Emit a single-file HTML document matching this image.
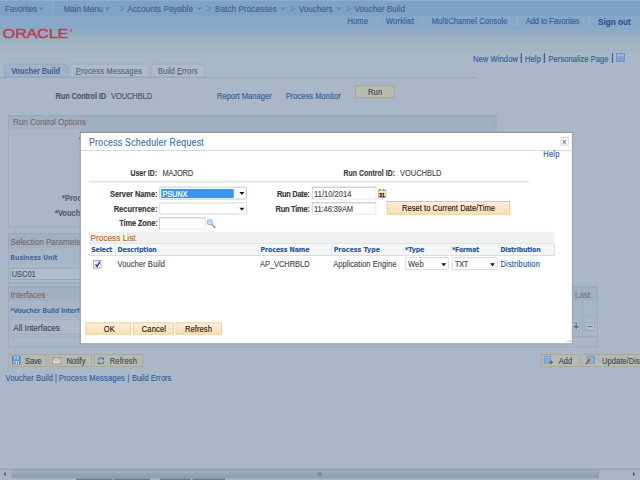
<!DOCTYPE html>
<html><head><meta charset="utf-8"><title>Voucher Build</title>
<style>
html,body{margin:0;padding:0;width:640px;height:480px;overflow:hidden;background:#a9b7c8;}
#pg{position:absolute;left:0;top:0;width:1024px;height:640px;transform:scale(0.625,0.75);transform-origin:0 0;font-family:"Liberation Sans",sans-serif;overflow:hidden;background:#a9b7c8;}
#pg div{position:absolute;}
#pg .t{position:absolute;white-space:nowrap;-webkit-text-stroke:0.22px currentColor;}
</style></head><body><div id="pg">
<div style="left:0px;top:0px;width:1024px;height:67.33px;background:linear-gradient(#86a8c9 0%,#88a8c8 56%,#8fa9c6 61%,#95aac4 67%,#9aafc2 72%,#9eb3c0 80%,#a1b4c2 86%,#a4b4c7 92%,#a6b6c8 100%);"></div>
<div style="left:0px;top:0px;width:1024px;height:20.8px;background:#7fa2c7;border-top:1px solid #90b0d2;box-sizing:border-box;"></div>
<div style="left:0px;top:66.67px;width:1024px;height:0.93px;background:#9cafbf;"></div>
<span class="t" style="left:8px;top:4.01617px;font-size:13px;line-height:16px;letter-spacing:-0.252px;color:#45628a;">Favorites</span>
<span class="t" style="left:101.92px;top:4.01617px;font-size:13px;line-height:16px;letter-spacing:-0.159px;color:#45628a;">Main Menu</span>
<span class="t" style="left:204px;top:4.01617px;font-size:13px;line-height:16px;letter-spacing:0.045px;color:#45628a;">Accounts Payable</span>
<span class="t" style="left:344px;top:4.01617px;font-size:13px;line-height:16px;letter-spacing:0.110px;color:#45628a;">Batch Processes</span>
<span class="t" style="left:477.92px;top:4.01617px;font-size:13px;line-height:16px;letter-spacing:-0.015px;color:#45628a;">Vouchers</span>
<span class="t" style="left:567.2px;top:4.01617px;font-size:13px;line-height:16px;letter-spacing:0.044px;color:#45628a;">Voucher Build</span>
<div style="left:62.08px;top:9.87px;width:0px;height:0px;border-left:4.4px solid transparent;border-right:4.4px solid transparent;border-top:4.8px solid #6187b7;"></div>
<div style="left:167.68px;top:9.87px;width:0px;height:0px;border-left:4.4px solid transparent;border-right:4.4px solid transparent;border-top:4.8px solid #6187b7;"></div>
<div style="left:315.36px;top:9.87px;width:0px;height:0px;border-left:4.4px solid transparent;border-right:4.4px solid transparent;border-top:4.8px solid #6187b7;"></div>
<div style="left:449.28px;top:9.87px;width:0px;height:0px;border-left:4.4px solid transparent;border-right:4.4px solid transparent;border-top:4.8px solid #6187b7;"></div>
<div style="left:537.76px;top:9.87px;width:0px;height:0px;border-left:4.4px solid transparent;border-right:4.4px solid transparent;border-top:4.8px solid #6187b7;"></div>
<span class="t" style="left:190.88px;top:2.85525px;font-size:13.5px;line-height:17px;color:#6183b0;-webkit-text-stroke:0.1px;">&gt;</span>
<span class="t" style="left:330.08px;top:2.85525px;font-size:13.5px;line-height:17px;color:#6183b0;-webkit-text-stroke:0.1px;">&gt;</span>
<span class="t" style="left:464px;top:2.85525px;font-size:13.5px;line-height:17px;color:#6183b0;-webkit-text-stroke:0.1px;">&gt;</span>
<span class="t" style="left:553.6px;top:2.85525px;font-size:13.5px;line-height:17px;color:#6183b0;-webkit-text-stroke:0.1px;">&gt;</span>
<div style="left:83.52px;top:0.8px;width:1.28px;height:20px;background:#98b5d3;"></div>
<span class="t" style="left:4.32px;top:35.1886px;font-size:16.4px;line-height:20px;color:#bd3c57;letter-spacing:-0.3px;transform:scaleX(1.6);transform-origin:0 50%;-webkit-text-stroke:0.55px #bd3c57;">ORACLE</span>
<span class="t" style="left:112px;top:37.3242px;font-size:5px;line-height:6px;color:#c0405b;">&#174;</span>
<span class="t" style="left:556px;top:21.438px;font-size:12px;line-height:15px;letter-spacing:0.196px;color:#33609a;">Home</span>
<span class="t" style="left:617.6px;top:21.438px;font-size:12px;line-height:15px;letter-spacing:0.293px;color:#33609a;">Worklist</span>
<span class="t" style="left:690.72px;top:21.438px;font-size:12px;line-height:15px;letter-spacing:0.194px;color:#33609a;">MultiChannel Console</span>
<span class="t" style="left:841.12px;top:21.438px;font-size:12px;line-height:15px;letter-spacing:-0.081px;color:#33609a;">Add to Favorites</span>
<span class="t" style="left:956.8px;top:20.6828px;font-size:13px;line-height:16px;letter-spacing:0.040px;color:#2d5291;font-weight:bold;">Sign out</span>
<div style="left:603.68px;top:23.33px;width:1.12px;height:10.67px;background:#9ab2cc;"></div>
<div style="left:675.68px;top:23.33px;width:1.12px;height:10.67px;background:#9ab2cc;"></div>
<div style="left:826.4px;top:23.33px;width:1.12px;height:10.67px;background:#9ab2cc;"></div>
<div style="left:942.4px;top:23.33px;width:1.12px;height:10.67px;background:#9ab2cc;"></div>
<span class="t" style="left:756.8px;top:70.7713px;font-size:12px;line-height:15px;letter-spacing:0.197px;color:#33609a;">New Window</span>
<span class="t" style="left:840px;top:70.7713px;font-size:12px;line-height:15px;letter-spacing:0.228px;color:#33609a;">Help</span>
<span class="t" style="left:877.6px;top:70.7713px;font-size:12px;line-height:15px;letter-spacing:0.121px;color:#33609a;">Personalize Page</span>
<div style="left:833.28px;top:71.47px;width:1.84px;height:12.4px;background:#4b5a7a;"></div>
<div style="left:870.4px;top:71.47px;width:1.84px;height:12.4px;background:#4b5a7a;"></div>
<div style="left:979.2px;top:71.47px;width:1.84px;height:12.4px;background:#4b5a7a;"></div>
<div style="left:985.6px;top:70.53px;width:14.24px;height:11.87px;border:1.5px solid #5d8ac2;box-sizing:border-box;background:#86a8d3;"></div>
<div style="left:987.2px;top:72.8px;width:11.04px;height:1.33px;background:#b9cde6;"></div>
<div style="left:987.2px;top:76.8px;width:11.04px;height:0.8px;background:#6f97c9;"></div>
<div style="left:992.32px;top:74.67px;width:0.96px;height:6.67px;background:#6f97c9;"></div>
<div style="left:0px;top:102.67px;width:763.2px;height:1.07px;background:#8fa5c1;"></div>
<div style="left:6.88px;top:85.33px;width:101.44px;height:18.13px;background:#a0b3cb;border:1px solid #8aa2c1;box-sizing:border-box;border-radius:3px 3px 0 0;"></div>
<div style="left:110.88px;top:85.33px;width:128.32px;height:17.6px;background:#afbbcb;border:1px solid #93a7c1;box-sizing:border-box;border-radius:3px 3px 0 0;"></div>
<div style="left:241.6px;top:85.33px;width:86.4px;height:17.6px;background:#afbbcb;border:1px solid #93a7c1;box-sizing:border-box;border-radius:3px 3px 0 0;"></div>
<span class="t" style="left:17.92px;top:87.3047px;font-size:12px;line-height:15px;letter-spacing:-0.183px;color:#45628c;font-weight:bold;-webkit-text-stroke:0;">Voucher Build</span>
<span class="t" style="left:121.12px;top:87.3047px;font-size:12px;line-height:15px;letter-spacing:0.293px;color:#586a84;"><u>P</u>rocess Messages</span>
<span class="t" style="left:252.8px;top:87.3047px;font-size:12px;line-height:15px;letter-spacing:0.040px;color:#586a84;">Build <u>E</u>rrors</span>
<span class="t" style="left:88.8px;top:120.771px;font-size:12px;line-height:15px;letter-spacing:-0.275px;color:#485668;font-weight:bold;-webkit-text-stroke:0.1px;">Run Control ID</span>
<span class="t" style="left:177.6px;top:120.771px;font-size:12px;line-height:15px;letter-spacing:-0.136px;color:#4c5866;">VOUCHBLD</span>
<span class="t" style="left:347.2px;top:120.771px;font-size:12px;line-height:15px;letter-spacing:0.057px;color:#33609a;">Report Manager</span>
<span class="t" style="left:457.12px;top:120.771px;font-size:12px;line-height:15px;letter-spacing:0.086px;color:#33609a;">Process Monitor</span>
<div style="left:568px;top:113.87px;width:63.52px;height:17.6px;background:#b9bbae;border:1px solid #a19f8c;box-sizing:border-box;"></div>
<span class="t" style="left:588.8px;top:115.571px;font-size:12px;line-height:15px;letter-spacing:0.235px;color:#3c4653;">Run</span>
<div style="left:12.8px;top:154.13px;width:781.6px;height:148.53px;border:1px solid #91a6be;box-sizing:border-box;"></div>
<div style="left:12.8px;top:154.13px;width:781.6px;height:18.53px;background:#a1b0c3;border:1px solid #91a6be;border-bottom:none;box-sizing:border-box;"></div>
<span class="t" style="left:20.8px;top:155.483px;font-size:13px;line-height:16px;letter-spacing:-0.077px;color:#7e6b6f;">Run Control Options</span>
<div style="left:128px;top:172px;width:665.6px;height:4.27px;background:#a1b0c3;"></div>
<span class="t" style="left:99.2px;top:257.171px;font-size:12px;line-height:15px;color:#4b5b78;font-weight:bold;-webkit-text-stroke:0.1px;">*Process Frequency</span>
<span class="t" style="left:88px;top:277.038px;font-size:12px;line-height:15px;color:#4b5b78;font-weight:bold;-webkit-text-stroke:0.1px;">*Voucher Build Type</span>
<div style="left:12.8px;top:310.67px;width:781.6px;height:66.93px;border:1px solid #91a6be;box-sizing:border-box;"></div>
<div style="left:12.8px;top:310.67px;width:781.6px;height:20.93px;background:#a1b0c3;border:1px solid #91a6be;border-bottom:none;box-sizing:border-box;"></div>
<span class="t" style="left:16.96px;top:313.883px;font-size:13px;line-height:16px;letter-spacing:-0.054px;color:#7e6b6f;">Selection Parameters</span>
<div style="left:13.76px;top:331.47px;width:779.2px;height:20px;background:#a6b5c7;border-bottom:1px solid #9fb0c3;box-sizing:border-box;"></div>
<span class="t" style="left:16.48px;top:336.718px;font-size:10px;line-height:12px;letter-spacing:-0.103px;color:#4a6a9b;font-weight:bold;-webkit-text-stroke:0;font-family:'DejaVu Sans',sans-serif;">Business Unit</span>
<div style="left:16.48px;top:357.33px;width:120px;height:15.73px;background:#afbccd;border:1px solid #8ea1b8;box-sizing:border-box;"></div>
<span class="t" style="left:18.72px;top:358.238px;font-size:12px;line-height:15px;letter-spacing:-0.057px;color:#4c5866;">USC01</span>
<div style="left:12.8px;top:382px;width:943.36px;height:80.53px;border:1px solid #91a6be;box-sizing:border-box;"></div>
<div style="left:12.8px;top:382px;width:943.36px;height:20.27px;background:#a1b0c3;border:1px solid #91a6be;border-bottom:none;box-sizing:border-box;"></div>
<span class="t" style="left:16.96px;top:385.083px;font-size:13px;line-height:16px;letter-spacing:-0.189px;color:#7e6b6f;">Interfaces</span>
<div style="left:13.76px;top:402.13px;width:941.44px;height:21.07px;background:#a6b5c7;border-bottom:1px solid #9fb0c3;box-sizing:border-box;"></div>
<span class="t" style="left:16.32px;top:407.518px;font-size:10px;line-height:12px;letter-spacing:-0.379px;color:#4a6a9b;font-weight:bold;-webkit-text-stroke:0;font-family:'DejaVu Sans',sans-serif;">*Voucher Build Interface</span>
<div style="left:16.48px;top:426.4px;width:192px;height:19.47px;background:#adbaca;border:1px solid #9aabc0;box-sizing:border-box;border-radius:2px;"></div>
<span class="t" style="left:21.28px;top:429.083px;font-size:13px;line-height:16px;letter-spacing:-0.065px;color:#3f4a59;">All Interfaces</span>
<div style="left:932.16px;top:401.33px;width:1.12px;height:46.67px;background:#91a6be;"></div>
<div style="left:13.76px;top:448.53px;width:941.44px;height:1px;background:#9db0c4;"></div>
<div style="left:916.8px;top:447.87px;width:38.4px;height:1px;background:#aea5b9;"></div>
<span class="t" style="left:920px;top:385.483px;font-size:13px;line-height:16px;letter-spacing:-0.145px;color:#6f7c8e;">Last</span>
<div style="left:913.6px;top:429.6px;width:14.88px;height:11.47px;border:1px solid #8ea0b8;box-sizing:border-box;background:#b3c0d0;"></div>
<div style="left:936px;top:429.6px;width:16px;height:11.47px;border:1px solid #8ea0b8;box-sizing:border-box;background:#b3c0d0;"></div>
<span class="t" style="left:917.76px;top:426.094px;font-size:14px;line-height:18px;color:#3c6aa3;font-weight:bold;">+</span>
<div style="left:939.68px;top:434.67px;width:8.32px;height:1.47px;background:#3c6aa3;"></div>
<div style="left:14.4px;top:471.73px;width:60.8px;height:17.2px;background:#b7bab0;border:1px solid #a7a390;box-sizing:border-box;"></div>
<span class="t" style="left:40px;top:474.105px;font-size:12px;line-height:15px;letter-spacing:-0.200px;color:#434d59;">Save</span>
<div style="left:78.4px;top:471.73px;width:68.8px;height:17.2px;background:#b7bab0;border:1px solid #a7a390;box-sizing:border-box;"></div>
<span class="t" style="left:106.24px;top:474.105px;font-size:12px;line-height:15px;letter-spacing:-0.048px;color:#434d59;">Notify</span>
<div style="left:151.04px;top:471.73px;width:77.6px;height:17.2px;background:#b7bab0;border:1px solid #a7a390;box-sizing:border-box;"></div>
<span class="t" style="left:175.68px;top:474.105px;font-size:12px;line-height:15px;letter-spacing:0.213px;color:#434d59;">Refresh</span>
<div style="left:866.24px;top:471.73px;width:61.12px;height:17.2px;background:#b7bab0;border:1px solid #a7a390;box-sizing:border-box;"></div>
<span class="t" style="left:894.08px;top:474.105px;font-size:12px;line-height:15px;letter-spacing:-0.026px;color:#434d59;">Add</span>
<div style="left:931.2px;top:471.73px;width:112px;height:17.2px;background:#b7bab0;border:1px solid #a7a390;box-sizing:border-box;"></div>
<span class="t" style="left:963.04px;top:474.105px;font-size:12px;line-height:15px;letter-spacing:0.130px;color:#434d59;">Update/Display</span>
<svg style="position:absolute;left:19.04px;top:474.27px" width="14.08" height="12.27" viewBox="0 0 16 16" preserveAspectRatio="none"><rect x="0.5" y="0.5" width="15" height="15" rx="1" fill="#5b8ed4" stroke="#4877b8"/><rect x="3.5" y="1" width="9" height="6" fill="#aac6ea"/><rect x="6.8" y="1" width="2.4" height="6" fill="#6f9bd9"/><rect x="3" y="9.5" width="10" height="6" fill="#d9e4f1"/><rect x="4.5" y="10.5" width="2.5" height="4.5" fill="#4877b8"/><rect x="9.5" y="10.5" width="2" height="4.5" fill="#4877b8"/></svg>
<svg style="position:absolute;left:83.2px;top:475.73px" width="15.04" height="9.87" viewBox="0 0 16 12" preserveAspectRatio="none"><rect x="0.7" y="0.7" width="14.6" height="10.6" fill="#d6d3c5" stroke="#a39580" stroke-width="1.4"/><path d="M1 1 L8 6.5 L15 1" fill="none" stroke="#a39580" stroke-width="1.2"/><rect x="4.5" y="6.5" width="7" height="2.4" fill="#e6e4da"/></svg>
<svg style="position:absolute;left:154.56px;top:475.73px" width="13.12" height="10.53" viewBox="0 0 16 16" preserveAspectRatio="none"><path d="M2.2 7.2 A6 6 0 0 1 12.6 3.6" fill="none" stroke="#3f72c0" stroke-width="2"/><path d="M13.8 8.8 A6 6 0 0 1 3.4 12.4" fill="none" stroke="#3f72c0" stroke-width="2"/><path d="M10 1.2 L15 2.4 L12 6.6 Z" fill="#2f62b4"/><path d="M6 14.8 L1 13.6 L4 9.4 Z" fill="#2f62b4"/></svg>
<svg style="position:absolute;left:869.76px;top:474px" width="15.68" height="12.27" viewBox="0 0 18 16" preserveAspectRatio="none"><rect x="0.7" y="0.7" width="11.6" height="12.6" fill="#86abdf" stroke="#6c94cf" stroke-width="1.4"/><rect x="2.5" y="3" width="8" height="1.2" fill="#a9c4ea"/><path d="M13.5 8.5 V15.5 M10 12 H17" stroke="#2e8a4e" stroke-width="2.4" fill="none"/></svg>
<svg style="position:absolute;left:936px;top:474px" width="15.68" height="12.27" viewBox="0 0 18 16" preserveAspectRatio="none"><rect x="4.7" y="0.7" width="12.6" height="13.6" fill="#86abdf" stroke="#6c94cf" stroke-width="1.4"/><rect x="7" y="6" width="8" height="1.2" fill="#a9c4ea"/><path d="M1.2 15 L10.5 5" stroke="#9a5a3a" stroke-width="2.6" fill="none"/><path d="M9 6.5 L12 3.2" stroke="#d8b04a" stroke-width="2.6" fill="none"/></svg>
<span class="t" style="left:8.96px;top:496.638px;font-size:12px;line-height:15px;letter-spacing:0.149px;color:#33609a;">Voucher Build</span>
<span class="t" style="left:88px;top:496.638px;font-size:12px;line-height:15px;color:#4e5f7c;">|</span>
<span class="t" style="left:93.92px;top:496.638px;font-size:12px;line-height:15px;letter-spacing:0.294px;color:#33609a;">Process Messages</span>
<span class="t" style="left:204.16px;top:496.638px;font-size:12px;line-height:15px;color:#4e5f7c;">|</span>
<span class="t" style="left:211.04px;top:496.638px;font-size:12px;line-height:15px;letter-spacing:0.043px;color:#33609a;">Build Errors</span>
<div style="left:0px;top:625.07px;width:1024px;height:13.07px;background:#a7b4c5;border-top:1px solid #8b9aac;box-sizing:border-box;"></div>
<div style="left:18.56px;top:625.6px;width:939.52px;height:12.27px;background:linear-gradient(#a8b6c7,#96a6bb 45%,#8b9cb3);border:1px solid #8191a6;box-sizing:border-box;border-radius:2px;"></div>
<span class="t" style="left:508.48px;top:627.447px;font-size:7px;line-height:9px;color:#5d6b7c;letter-spacing:0.3px;">III</span>
<div style="left:5.76px;top:629.07px;width:0px;height:0px;border-top:3px solid transparent;border-bottom:3px solid transparent;border-right:3.4px solid #3f4954;"></div>
<div style="left:1013.44px;top:629.07px;width:0px;height:0px;border-top:3px solid transparent;border-bottom:3px solid transparent;border-left:3.4px solid #3f4954;"></div>
<div style="left:0px;top:638px;width:1024px;height:2px;background:#aab6c6;"></div>
<div style="left:121.6px;top:638.13px;width:58.4px;height:1.87px;background:#6f7b89;"></div>
<div style="left:182.4px;top:638.13px;width:57.6px;height:1.87px;background:#6f7b89;"></div>
<div style="left:256px;top:638.13px;width:48.8px;height:1.87px;background:#6f7b89;"></div>
<div style="left:308px;top:638.13px;width:52px;height:1.87px;background:#6f7b89;"></div>
<div style="left:128px;top:176px;width:788.16px;height:283.47px;background:#fff;border:solid;border-color:#7b726e #8a8a8a #666 #7b726e;border-width:1.33px 1.6px;box-sizing:border-box;box-shadow:0 0 1.5px rgba(90,90,90,.4);"></div>
<span class="t" style="left:142.4px;top:179.561px;font-size:14px;line-height:18px;letter-spacing:0.418px;color:#4870ab;">Process Scheduler Request</span>
<div style="left:128.96px;top:200px;width:786.24px;height:0.93px;background:#c5cfcf;"></div>
<div style="left:896.8px;top:183.2px;width:13.12px;height:10.93px;border:1px solid #c9c9c9;box-sizing:border-box;background:#fafafa;"></div>
<span class="t" style="left:899.36px;top:180.683px;font-size:13px;line-height:16px;color:#606060;-webkit-text-stroke:0.1px;">&#215;</span>
<span class="t" style="left:869.28px;top:198.238px;font-size:12px;line-height:15px;letter-spacing:0.348px;color:#2b5ea3;">Help</span>
<span class="t" style="left:208.8px;top:223.926px;font-size:11px;line-height:14px;letter-spacing:0.027px;color:#3a3a3a;font-weight:bold;">User ID:</span>
<span class="t" style="left:260px;top:223.438px;font-size:12px;line-height:15px;letter-spacing:-0.312px;color:#4e4e4e;">MAJORD</span>
<span class="t" style="left:549.6px;top:223.926px;font-size:11px;line-height:14px;letter-spacing:0.076px;color:#3a3a3a;font-weight:bold;">Run Control ID:</span>
<span class="t" style="left:640px;top:223.438px;font-size:12px;line-height:15px;letter-spacing:-0.036px;color:#4e4e4e;">VOUCHBLD</span>
<div style="left:142.88px;top:242.4px;width:704px;height:0.93px;background:#c9c9c9;"></div>
<span class="t" style="left:176px;top:250.638px;font-size:12px;line-height:15px;letter-spacing:-0.116px;color:#3a3a3a;font-weight:bold;">Server Name:</span>
<span class="t" style="left:181.92px;top:270.638px;font-size:12px;line-height:15px;letter-spacing:0.004px;color:#3a3a3a;font-weight:bold;">Recurrence:</span>
<span class="t" style="left:190.72px;top:290.371px;font-size:12px;line-height:15px;letter-spacing:-0.252px;color:#3a3a3a;font-weight:bold;">Time Zone:</span>
<span class="t" style="left:443.2px;top:250.638px;font-size:12px;line-height:15px;letter-spacing:-0.519px;color:#3a3a3a;font-weight:bold;">Run Date:</span>
<span class="t" style="left:440.8px;top:270.638px;font-size:12px;line-height:15px;letter-spacing:-0.450px;color:#3a3a3a;font-weight:bold;">Run Time:</span>
<div style="left:255.04px;top:249.33px;width:140px;height:16.67px;border:1.3px solid #8dbbe9;box-sizing:border-box;background:#fff;border-radius:1.5px;"></div>
<div style="left:257.6px;top:251.6px;width:116.64px;height:12.13px;background:#3a96f5;"></div>
<span class="t" style="left:259.84px;top:250.705px;font-size:12px;line-height:15px;letter-spacing:-0.269px;color:#fff;">PSUNX</span>
<div style="left:383.36px;top:256.47px;width:0px;height:0px;border-left:4px solid transparent;border-right:4px solid transparent;border-top:4px solid #151515;"></div>
<div style="left:255.04px;top:269.73px;width:140px;height:16.67px;border:1.3px solid #c6c9cd;box-sizing:border-box;background:#fff;border-radius:1.5px;"></div>
<div style="left:383.36px;top:276.87px;width:0px;height:0px;border-left:4px solid transparent;border-right:4px solid transparent;border-top:4px solid #151515;"></div>
<div style="left:255.04px;top:289.87px;width:73.92px;height:16.27px;border:1.2px solid;border-color:#a4a8ae #d6dade #dde0e5 #b4b8be;box-sizing:border-box;background:#fff;"></div>
<div style="left:499.2px;top:249.33px;width:103.04px;height:16.53px;border:1.2px solid;border-color:#a4a8ae #d6dade #dde0e5 #b4b8be;box-sizing:border-box;background:#fff;"></div>
<span class="t" style="left:502.4px;top:250.638px;font-size:12px;line-height:15px;letter-spacing:0.083px;color:#4e4e4e;">11/10/2014</span>
<div style="left:499.2px;top:269.73px;width:103.04px;height:16.53px;border:1.2px solid;border-color:#a4a8ae #d6dade #dde0e5 #b4b8be;box-sizing:border-box;background:#fff;"></div>
<span class="t" style="left:502.4px;top:271.038px;font-size:12px;line-height:15px;letter-spacing:-0.143px;color:#4e4e4e;">11:46:39AM</span>
<div style="left:604.96px;top:252.8px;width:12.64px;height:11.6px;border:1.3px solid #bd9a4c;box-sizing:border-box;background:#fdf5d9;"></div>
<div style="left:607.36px;top:251.87px;width:1.92px;height:2.13px;background:#8f7434;"></div>
<div style="left:613.12px;top:251.87px;width:1.92px;height:2.13px;background:#8f7434;"></div>
<span class="t" style="left:606.88px;top:254.52px;font-size:7.5px;line-height:9px;color:#111;font-weight:bold;-webkit-text-stroke:0.4px #111;">31</span>
<svg style="position:absolute;left:329.6px;top:291.2px" width="16" height="13.33" viewBox="0 0 20 20" preserveAspectRatio="none"><circle cx="7.2" cy="8.2" r="5.4" fill="#c3dcf4" stroke="#8db1d9" stroke-width="1.8"/><path d="M11.4 12.4 L16.6 17.6" stroke="#d39a55" stroke-width="2.8" stroke-linecap="round"/><circle cx="17" cy="18" r="1.3" fill="#52639a"/></svg>
<div style="left:619.2px;top:268px;width:196.48px;height:18px;background:linear-gradient(#fdf0d7,#fbdfb0);border:1px solid #e3b56e;box-sizing:border-box;"></div>
<span class="t" style="left:643.2px;top:269.971px;font-size:12px;line-height:15px;letter-spacing:0.097px;color:#1c1c1c;">Reset to Current Date/Time</span>
<div style="left:142.4px;top:309.33px;width:744.48px;height:15.2px;background:#f0f1f1;"></div>
<span class="t" style="left:144.8px;top:308.949px;font-size:13px;line-height:16px;letter-spacing:0.126px;color:#b0702e;">Process List</span>
<div style="left:142.4px;top:324.27px;width:744.48px;height:16.67px;background:#f6f7f8;border-top:1px solid #dcdfe2;border-bottom:1px solid #d2d6da;box-sizing:border-box;"></div>
<div style="left:184px;top:324.8px;width:1.12px;height:16px;background:#dfe3e7;"></div>
<div style="left:412.8px;top:324.8px;width:1.12px;height:16px;background:#dfe3e7;"></div>
<div style="left:529.92px;top:324.8px;width:1.12px;height:16px;background:#dfe3e7;"></div>
<div style="left:645.76px;top:324.8px;width:1.12px;height:16px;background:#dfe3e7;"></div>
<div style="left:720.64px;top:324.8px;width:1.12px;height:16px;background:#dfe3e7;"></div>
<div style="left:797.76px;top:324.8px;width:1.12px;height:16px;background:#dfe3e7;"></div>
<div style="left:886.4px;top:324.8px;width:1.12px;height:16px;background:#dfe3e7;"></div>
<span class="t" style="left:146.08px;top:326.985px;font-size:10px;line-height:12px;letter-spacing:-0.298px;color:#2f5d9b;font-weight:bold;font-family:'DejaVu Sans',sans-serif;">Select</span>
<span class="t" style="left:188px;top:326.985px;font-size:10px;line-height:12px;letter-spacing:-0.179px;color:#2f5d9b;font-weight:bold;font-family:'DejaVu Sans',sans-serif;">Description</span>
<span class="t" style="left:416.8px;top:326.985px;font-size:10px;line-height:12px;letter-spacing:-0.096px;color:#2f5d9b;font-weight:bold;font-family:'DejaVu Sans',sans-serif;">Process Name</span>
<span class="t" style="left:533.92px;top:326.985px;font-size:10px;line-height:12px;letter-spacing:0.063px;color:#2f5d9b;font-weight:bold;font-family:'DejaVu Sans',sans-serif;">Process Type</span>
<span class="t" style="left:648px;top:326.985px;font-size:10px;line-height:12px;letter-spacing:-0.122px;color:#2f5d9b;font-weight:bold;font-family:'DejaVu Sans',sans-serif;">*Type</span>
<span class="t" style="left:723.2px;top:326.985px;font-size:10px;line-height:12px;letter-spacing:-0.315px;color:#2f5d9b;font-weight:bold;font-family:'DejaVu Sans',sans-serif;">*Format</span>
<span class="t" style="left:800.8px;top:326.985px;font-size:10px;line-height:12px;letter-spacing:-0.275px;color:#2f5d9b;font-weight:bold;font-family:'DejaVu Sans',sans-serif;">Distribution</span>
<div style="left:149.12px;top:346.67px;width:13.12px;height:11.6px;border:1.3px solid #8a8e94;box-sizing:border-box;background:linear-gradient(135deg,#e4e6e8,#f8f9fa);"></div>
<svg style="position:absolute;left:150.72px;top:347.87px" width="10.56" height="9.06667" viewBox="0 0 10 10"><path d="M1.3 4.9 L4 8.2 L8.9 1.2" fill="none" stroke="#2039a0" stroke-width="2.3"/></svg>
<span class="t" style="left:188px;top:345.038px;font-size:12px;line-height:15px;letter-spacing:0.149px;color:#4e4e4e;">Voucher Build</span>
<span class="t" style="left:416px;top:345.038px;font-size:12px;line-height:15px;letter-spacing:-0.083px;color:#4e4e4e;">AP_VCHRBLD</span>
<span class="t" style="left:533.12px;top:345.038px;font-size:12px;line-height:15px;letter-spacing:0.104px;color:#4e4e4e;">Application Engine</span>
<div style="left:648px;top:343.2px;width:69.76px;height:17.07px;border:1.3px solid #c6c9cd;box-sizing:border-box;background:#fff;border-radius:1.5px;"></div>
<span class="t" style="left:652.8px;top:344.771px;font-size:12px;line-height:15px;letter-spacing:0.217px;color:#4e4e4e;">Web</span>
<div style="left:706.08px;top:350.53px;width:0px;height:0px;border-left:4px solid transparent;border-right:4px solid transparent;border-top:4px solid #151515;"></div>
<div style="left:723.2px;top:343.2px;width:72.96px;height:17.07px;border:1.3px solid #c6c9cd;box-sizing:border-box;background:#fff;border-radius:1.5px;"></div>
<span class="t" style="left:728px;top:344.771px;font-size:12px;line-height:15px;letter-spacing:-0.624px;color:#4e4e4e;">TXT</span>
<div style="left:784.48px;top:350.53px;width:0px;height:0px;border-left:4px solid transparent;border-right:4px solid transparent;border-top:4px solid #151515;"></div>
<span class="t" style="left:800.8px;top:345.038px;font-size:12px;line-height:15px;letter-spacing:0.264px;color:#2b5ea3;">Distribution</span>
<div style="left:136.96px;top:429.87px;width:72.96px;height:16.53px;background:linear-gradient(#fdf0d7,#fbdfb0);border:1px solid #e3b56e;box-sizing:border-box;"></div>
<span class="t" style="left:166.08px;top:431.171px;font-size:12px;line-height:15px;color:#1c1c1c;">OK</span>
<div style="left:212.8px;top:429.87px;width:65.6px;height:16.53px;background:linear-gradient(#fdf0d7,#fbdfb0);border:1px solid #e3b56e;box-sizing:border-box;"></div>
<span class="t" style="left:226.88px;top:431.171px;font-size:12px;line-height:15px;letter-spacing:0.253px;color:#1c1c1c;">Cancel</span>
<div style="left:280.96px;top:429.87px;width:73.6px;height:16.53px;background:linear-gradient(#fdf0d7,#fbdfb0);border:1px solid #e3b56e;box-sizing:border-box;"></div>
<span class="t" style="left:296px;top:431.171px;font-size:12px;line-height:15px;letter-spacing:0.167px;color:#1c1c1c;">Refresh</span>
<div style="left:912.96px;top:450.13px;width:1.52px;height:1.27px;background:#7c7c7c;"></div>
<div style="left:909.76px;top:452.53px;width:1.52px;height:1.27px;background:#7c7c7c;"></div>
<div style="left:912.96px;top:452.53px;width:1.52px;height:1.27px;background:#7c7c7c;"></div>
<div style="left:906.56px;top:454.93px;width:1.52px;height:1.27px;background:#7c7c7c;"></div>
<div style="left:909.76px;top:454.93px;width:1.52px;height:1.27px;background:#7c7c7c;"></div>
<div style="left:912.96px;top:454.93px;width:1.52px;height:1.27px;background:#7c7c7c;"></div>
<div style="left:126.24px;top:182.93px;width:1.28px;height:2.93px;background:#7b8797;"></div>
<div style="left:126.24px;top:203.73px;width:1.12px;height:6px;background:#97a3af;"></div>
</div></body></html>
